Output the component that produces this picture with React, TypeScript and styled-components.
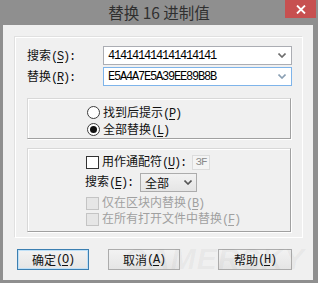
import React from 'react';
import styled, { createGlobalStyle } from 'styled-components';

const UI_FONT = `"Noto Sans CJK SC", "Noto Sans", sans-serif`;
const ASCII_FONT = `"Liberation Mono", "DejaVu Sans Mono", monospace`;

const Global = createGlobalStyle`
  html, body { margin: 0; padding: 0; background: #8f8f8f; }
  body { width: 318px; height: 283px; overflow: hidden; }
`;

const Window = styled.div`
  width: 318px;
  height: 283px;
  box-sizing: border-box;
  background: #8f8f8f;
  display: flex;
  flex-direction: column;
  font-family: ${UI_FONT};
  position: relative;
  overflow: hidden;
`;

const TitleBar = styled.div`
  height: 25px;
  flex: none;
  display: grid;
  grid-template-columns: 1fr auto 1fr;
  align-items: start;
`;

const Title = styled.div`
  grid-column: 2;
  font-size: 15.5px;
  line-height: 25px;
  color: #2f2f2f;
  white-space: nowrap;
`;

const CloseButton = styled.div`
  grid-column: 3;
  justify-self: end;
  margin-right: 2px;
  width: 31px;
  height: 18px;
  background: #c75050;
  display: flex;
  align-items: center;
  justify-content: center;
`;

const Client = styled.div`
  flex: 1;
  margin: 0 5px 3px 3px;
  background: #f0f0f0;
  padding: 12px 10px 0 12px;
  display: flex;
  flex-direction: column;
  position: relative;
`;

const OuterPanel = styled.div`
  height: 201px;
  box-sizing: border-box;
  border: 1px solid #ffffff;
  box-shadow: -1px -1px 0 #e0e0e0;
  padding: 8px 11px 0 11px;
  display: flex;
  flex-direction: column;
`;

const FieldGrid = styled.div`
  display: grid;
  grid-template-columns: 76px 189px;
  row-gap: 2px;
  align-items: center;
`;

const Label = styled.span<{ $disabled?: boolean }>`
  font-size: 12px;
  line-height: 16px;
  color: ${(p) => (p.$disabled ? '#a0a0a0' : '#111')};
  white-space: nowrap;
`;

const Ascii = styled.span`
  font-family: ${ASCII_FONT};
  font-size: 12px;
  letter-spacing: -1.2px;
  u { text-decoration-thickness: 1px; text-underline-offset: 2px; }
`;

const Combo = styled.div<{ $focused?: boolean }>`
  height: 19px;
  box-sizing: border-box;
  border: 1px solid ${(p) => (p.$focused ? '#7eb4ea' : '#abadb3')};
  background: #fff;
  display: flex;
  align-items: center;
  justify-content: space-between;
  padding: 0 5px 0 4px;
`;

const ComboText = styled.span`
  font-family: ${ASCII_FONT};
  font-size: 12px;
  letter-spacing: -1.2px;
  color: #000;
`;

const GroupBox = styled.div<{ $h: number; $mt: number }>`
  height: ${(p) => p.$h}px;
  margin-top: ${(p) => p.$mt}px;
  box-sizing: border-box;
  border-top: 1px solid #d8d8d8;
  border-left: 1px solid #d8d8d8;
  border-right: 1px solid #a0a0a0;
  border-bottom: 1px solid #a0a0a0;
  box-shadow: inset 1px 1px 0 #fff, 1px 1px 0 #fff;
  display: flex;
  flex-direction: column;
`;

const RadioList = styled.div`
  padding: 5px 0 0 59px;
  display: flex;
  flex-direction: column;
`;

const OptionRow = styled.div<{ $h?: number }>`
  height: ${(p) => p.$h ?? 17}px;
  display: flex;
  align-items: center;
  gap: 3px;
`;

const RadioCircle = styled.span<{ $checked?: boolean }>`
  width: 13px;
  height: 13px;
  box-sizing: border-box;
  border-radius: 50%;
  border: 1px solid #3c3c3c;
  background: #fff;
  display: flex;
  align-items: center;
  justify-content: center;
  flex: none;
  &::after {
    content: '';
    display: ${(p) => (p.$checked ? 'block' : 'none')};
    width: 7px;
    height: 7px;
    border-radius: 50%;
    background: #111;
  }
`;

const CheckBox = styled.span<{ $disabled?: boolean }>`
  width: 13px;
  height: 13px;
  box-sizing: border-box;
  border: 1px solid ${(p) => (p.$disabled ? '#c4c4c4' : '#333')};
  background: ${(p) => (p.$disabled ? '#e6e6e6' : '#fff')};
  flex: none;
`;

const OptionsList = styled.div`
  padding: 5px 0 0 58px;
  display: flex;
  flex-direction: column;
`;

const SmallEdit = styled.span`
  margin-left: 3px;
  width: 18px;
  height: 15px;
  box-sizing: border-box;
  border: 1px solid #dcdcdc;
  background: #f4f4f4;
  font-family: ${ASCII_FONT};
  font-size: 11px;
  letter-spacing: -1px;
  color: #8a8a8a;
  display: flex;
  align-items: center;
  justify-content: center;
`;

const SearchRow = styled.div`
  height: 22px;
  display: flex;
  align-items: center;
  margin: 1px 0 2px -1px;
`;

const SelectBox = styled.div`
  margin-left: 7px;
  width: 57px;
  height: 19px;
  box-sizing: border-box;
  border: 1px solid #acacac;
  background: linear-gradient(#f2f2f2, #e5e5e5);
  display: flex;
  align-items: center;
  justify-content: space-between;
  padding: 0 4px 0 4px;
  font-size: 12px;
  color: #111;
`;

const ButtonRow = styled.div`
  margin-top: 11px;
  padding: 0 11px 0 2px;
  display: flex;
  align-items: center;
  gap: 19px;
`;

const Button = styled.div<{ $default?: boolean; $w?: number; $push?: boolean }>`
  width: ${(p) => p.$w ?? 72}px;
  height: 21px;
  box-sizing: border-box;
  border: 1px solid ${(p) => (p.$default ? '#3c7fb1' : '#acacac')};
  background: linear-gradient(#f2f2f2, #e5e5e5);
  box-shadow: ${(p) => (p.$default ? 'inset 0 0 0 1px #bfe0f7' : 'none')};
  display: flex;
  align-items: center;
  justify-content: center;
  font-size: 12px;
  color: #111;
  margin-left: ${(p) => (p.$push ? 'auto' : '0')};
`;

const Watermark = styled.div`
  position: absolute;
  right: 8px;
  bottom: 4px;
  font-family: "Liberation Sans", sans-serif;
  font-weight: 700;
  font-style: italic;
  font-size: 30px;
  letter-spacing: 1px;
  color: rgba(120, 120, 120, 0.07);
  pointer-events: none;
`;

const Chevron = ({ color = '#6d6d6d' }: { color?: string }) => (
  <svg width="8" height="5" viewBox="0 0 8 5">
    <path d="M0.5 0.5 L4 4 L7.5 0.5" fill="none" stroke={color} strokeWidth="1.6" />
  </svg>
);

const Mn = ({ k }: { k: string }) => (
  <Ascii>
    (<u>{k}</u>)
  </Ascii>
);

export default function App() {
  return (
    <>
      <Global />
      <Window>
        <TitleBar>
          <Title>替换 16 进制值</Title>
          <CloseButton>
            <svg width="10" height="9" viewBox="0 0 10 9">
              <path d="M1 0.5 L9 8.5 M9 0.5 L1 8.5" stroke="#fff" strokeWidth="1.8" />
            </svg>
          </CloseButton>
        </TitleBar>
        <Client>
          <OuterPanel>
            <FieldGrid>
              <Label>
                搜索<Mn k="S" />
                <Ascii>:</Ascii>
              </Label>
              <Combo>
                <ComboText>414141414141414141</ComboText>
                <Chevron />
              </Combo>
              <Label>
                替换<Mn k="R" />
                <Ascii>:</Ascii>
              </Label>
              <Combo $focused>
                <ComboText>E5A4A7E5A39EE89B8B</ComboText>
                <Chevron color="#8a9fb3" />
              </Combo>
            </FieldGrid>

            <GroupBox $h={41} $mt={12}>
              <RadioList>
                <OptionRow>
                  <RadioCircle />
                  <Label>
                    找到后提示<Mn k="P" />
                  </Label>
                </OptionRow>
                <OptionRow>
                  <RadioCircle $checked />
                  <Label>
                    全部替换<Mn k="L" />
                  </Label>
                </OptionRow>
              </RadioList>
            </GroupBox>

            <GroupBox $h={84} $mt={9}>
              <OptionsList>
                <OptionRow $h={16}>
                  <CheckBox />
                  <Label>
                    用作通配符<Mn k="U" />
                    <Ascii>:</Ascii>
                  </Label>
                  <SmallEdit>3F</SmallEdit>
                </OptionRow>
                <SearchRow>
                  <Label>
                    搜索<Mn k="E" />
                    <Ascii>:</Ascii>
                  </Label>
                  <SelectBox>
                    <span>全部</span>
                    <Chevron color="#555" />
                  </SelectBox>
                </SearchRow>
                <OptionRow $h={16}>
                  <CheckBox $disabled />
                  <Label $disabled>
                    仅在区块内替换<Mn k="B" />
                  </Label>
                </OptionRow>
                <OptionRow $h={16}>
                  <CheckBox $disabled />
                  <Label $disabled>
                    在所有打开文件中替换<Mn k="F" />
                  </Label>
                </OptionRow>
              </OptionsList>
            </GroupBox>
          </OuterPanel>

          <ButtonRow>
            <Button $default>
              确定<Mn k="O" />
            </Button>
            <Button>
              取消<Mn k="A" />
            </Button>
            <Button $w={74} $push>
              帮助<Mn k="H" />
            </Button>
          </ButtonRow>
          <Watermark>GAMERSKY</Watermark>
        </Client>
      </Window>
    </>
  );
}
